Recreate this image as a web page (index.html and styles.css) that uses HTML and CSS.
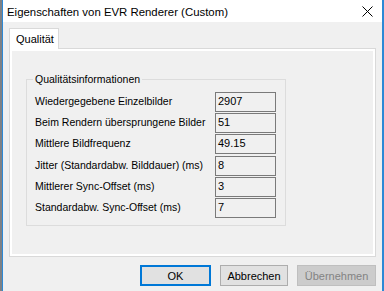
FILE: index.html
```html
<!DOCTYPE html>
<html lang="de">
<head>
    <meta charset="UTF-8">
    <meta name="viewport" content="width=device-width, initial-scale=1.0">
    <title>Eigenschaften von EVR Renderer (Custom)</title>
    <link rel="stylesheet" href="styles.css">
</head>
<body>

<div class="desk"></div>
<div class="window">
    <div class="titlebar">
        <span class="title">Eigenschaften von EVR Renderer (Custom)</span>
        <svg class="close" width="11" height="11" viewBox="0 0 11 11">
            <path d="M0.5 0.5 L10.5 10.5 M10.5 0.5 L0.5 10.5" stroke="#000" stroke-width="1" fill="none"/>
        </svg>
    </div>
    <div class="content">
        <div class="tabs">
            <div class="tab">Qualität</div>
        </div>
        <div class="pane">
            <div class="page">
                <fieldset class="group">
                    <legend>Qualitätsinformationen</legend>
                    <div class="rows">
                        <span class="label">Wiedergegebene Einzelbilder</span>
                        <span class="value">2907</span>
                        <span class="label">Beim Rendern übersprungene Bilder</span>
                        <span class="value">51</span>
                        <span class="label">Mittlere Bildfrequenz</span>
                        <span class="value">49.15</span>
                        <span class="label">Jitter (Standardabw. Bilddauer) (ms)</span>
                        <span class="value">8</span>
                        <span class="label">Mittlerer Sync-Offset (ms)</span>
                        <span class="value">3</span>
                        <span class="label">Standardabw. Sync-Offset (ms)</span>
                        <span class="value">7</span>
                    </div>
                </fieldset>
            </div>
        </div>
        <div class="buttons">
            <button class="btn default">OK</button>
            <button class="btn cancel">Abbrechen</button>
            <button class="btn" disabled>Übernehmen</button>
        </div>
    </div>
</div>

</body>
</html>
```

FILE: styles.css
```css
html, body {
    margin: 0;
    height: 100%;
}
body {
    display: flex;
    width: 384px;
    height: 291px;
    overflow: hidden;
    font-family: "Liberation Sans", Arial, sans-serif;
    font-size: 10.5px;
    color: #000;
    background: #f0f0f0;
}
.desk {
    width: 2px;
    background: #7d8186;
}
.window {
    flex: 1;
    display: flex;
    flex-direction: column;
    border-left: 1px solid #2d89d6;
    border-right: 2px solid #2d89d6;
    background: #f0f0f0;
}
.titlebar {
    height: 22px;
    background: #fff;
    display: flex;
    align-items: center;
    padding-left: 4px;
    padding-right: 9px;
}
.title {
    flex: 1;
    font-size: 11.4px;
    padding-top: 1px;
}
.close {
    display: block;
    margin-top: 1px;
}
.content {
    flex: 1;
    display: flex;
    flex-direction: column;
    padding: 6px 6px 0 6px;
}
.tabs {
    display: flex;
    height: 20px;
    position: relative;
    z-index: 1;
}
.tab {
    width: 50px;
    height: 21px;
    box-sizing: border-box;
    background: #fff;
    border: 1px solid #d9d9d9;
    border-bottom: none;
    padding: 4px 0 0 6px;
    font-size: 11px;
}
.pane {
    height: 209px;
    box-sizing: border-box;
    border: 1px solid #d9d9d9;
    background: #fff;
    padding: 2px;
}
.page {
    height: 100%;
    background: #f0f0f0;
    padding: 21px 0 0 14px;
    box-sizing: border-box;
}
.group {
    width: 260px;
    box-sizing: border-box;
    margin: 0;
    border: 1px solid #dcdcdc;
    padding: 6px 9px 7px 8px;
}
.group legend {
    padding: 0 2px;
    margin-left: -2px;
    line-height: 14px;
}
.rows {
    display: grid;
    grid-template-columns: 1fr 61px;
    grid-auto-rows: 20px;
    row-gap: 1.2px;
    align-items: center;
}
.label {
    margin-top: -2px;
}
.value {
    height: 20px;
    box-sizing: border-box;
    border: 1px solid #7a7a7a;
    background: #f0f0f0;
    padding: 2px 0 0 2px;
    font-size: 11px;
}
.buttons {
    display: flex;
    justify-content: flex-end;
    gap: 9px;
    margin-top: 8px;
}
.btn {
    width: 71px;
    height: 21px;
    box-sizing: border-box;
    margin: 0;
    padding: 0;
    font-family: inherit;
    font-size: 11px;
    color: #000;
    background: #e1e1e1;
    border: 1px solid #adadad;
}
.btn.default {
    border: 2px solid #0078d7;
}
.btn.cancel {
    width: 68px;
}
.btn:disabled {
    width: 79px;
    color: #838383;
    background: #cccccc;
    border-color: #bfbfbf;
}
```
